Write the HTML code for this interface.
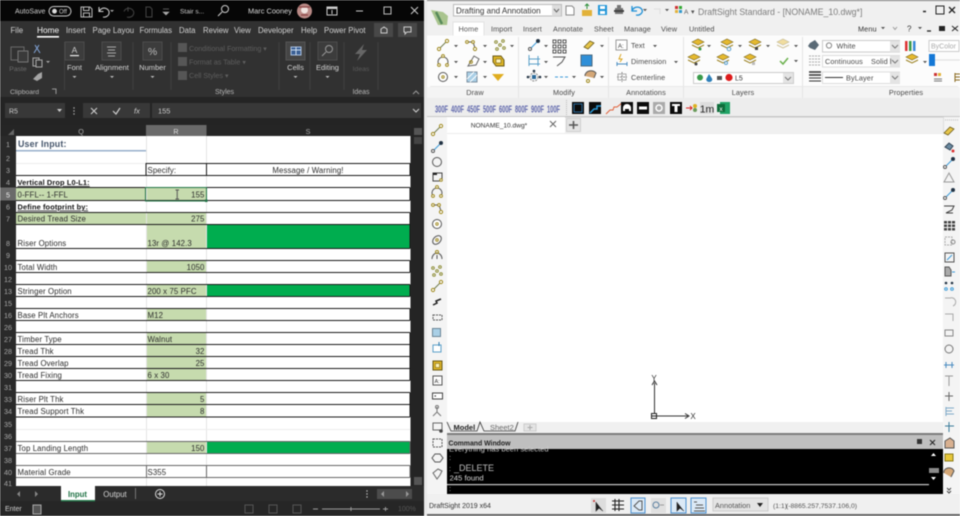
<!DOCTYPE html>
<html><head><meta charset="utf-8"><style>
html,body{margin:0;padding:0;background:#fff;width:960px;height:516px;overflow:hidden}
svg{display:block;filter:blur(.42px)}
text{font-family:"Liberation Sans",sans-serif;white-space:pre}
.c{font-size:7.8px;fill:#2b2b2b;letter-spacing:.12px}
.b{font-weight:bold;fill:#111;font-size:7.4px}
.h{font-size:7.2px;fill:#a8a8a8;text-anchor:middle}
.t{font-size:7.8px;fill:#d0d0d0}
.m{text-anchor:middle}
.e{text-anchor:end}
.d{font-size:7.3px;fill:#4a4a4a;letter-spacing:.1px}
.l{fill:none;stroke:#c9c9c9;stroke-width:1}
.g{fill:none;stroke:#6c6c4a;stroke-width:1}
</style></head><body>
<svg width="960" height="516" viewBox="0 0 960 516" xmlns="http://www.w3.org/2000/svg">
<defs>
<g id="ln"><path d="M-4 4L4-4" stroke="#6f7a4a" fill="none"/><circle cx="-4" cy="4" r="1.600" fill="#fff" stroke="#a08a20"/><circle cx="4" cy="-4" r="1.600" fill="#fff" stroke="#a08a20"/></g>
<g id="lb"><path d="M-4 4L4-4" stroke="#3a9ad8" fill="none"/><circle cx="-4" cy="4" r="1.500" fill="#fff" stroke="#555"/><circle cx="4" cy="-4" r="1.500" fill="#234" stroke="#234"/></g>
<g id="poly"><path d="M-4-3L2-3L4 3" stroke="#555" fill="none"/><circle cx="-4" cy="-3" r="1.400" fill="#fff" stroke="#a08a20"/><circle cx="2" cy="-3" r="1.400" fill="#fff" stroke="#a08a20"/><circle cx="4" cy="4" r="1.600" fill="#fff" stroke="#a08a20"/></g>
<g id="dots"><circle cx="-4" cy="-3" r="1.300" fill="none" stroke="#8a8a30"/><circle cx="3" cy="-4" r="1.300" fill="none" stroke="#8a8a30"/><circle cx="0" cy="0" r="1.300" fill="none" stroke="#8a8a30"/><circle cx="-3" cy="4" r="1.300" fill="none" stroke="#8a8a30"/><circle cx="4" cy="3" r="1.300" fill="none" stroke="#8a8a30"/></g>
<g id="circ"><circle r="4.500" fill="#fff" stroke="#555"/><circle r="1.200" fill="none" stroke="#a08a20"/></g>
<g id="arc"><path d="M-4 4A5 5 0 1 1 4 4" fill="none" stroke="#555"/><circle cx="-4" cy="4" r="1.400" fill="#fff" stroke="#a08a20"/><circle cx="4" cy="4" r="1.400" fill="#fff" stroke="#a08a20"/><circle cy="-5" r="1.400" fill="#fff" stroke="#a08a20"/></g>
<g id="layer"><path d="M-6-2L0-5L6-2L0 1Z" fill="#e5b92f" stroke="#7a6518" stroke-width=".6"/><path d="M-6 1L0 4L6 1" fill="none" stroke="#9a8020"/></g>
<g id="eras"><path d="M-5 2L1-4L5-2L-1 4Z" fill="#e7c64a" stroke="#6a5a18" stroke-width=".8"/></g>
<g id="dn"><path d="M-2-1L2-1L0 1.200Z" fill="#555"/></g>
<g id="blk"><rect x="-6" y="-6" width="12" height="12" fill="#0b0b0b"/></g>
</defs>

<!-- LEFT WINDOW -->
<rect x="0" y="0" width="425" height="516" fill="#222"/>
<rect x="0" y="0" width="425" height="21" fill="#060606"/>
<rect x="0" y="21" width="425" height="76" fill="#313131"/>
<rect x="0" y="97" width="425" height="28" fill="#242424"/>
<text x="15" y="13.500" style="font-size:7px;fill:#cfcfcf">AutoSave</text>
<rect x="49" y="6.500" width="22" height="9.500" rx="4.700" fill="none" stroke="#ccc"/><circle cx="54.500" cy="11.200" r="2.400" fill="#ddd"/><text x="59" y="13.500" style="font-size:6px;fill:#ccc">Off</text>
<path d="M81 7H90L92 9V17H81ZM83.500 7V10.500H89V7M83.500 17V13H89.500V17" fill="none" stroke="#bbb"/>
<path d="M99 7V11.500H103.500M99.500 11A5 4.500 0 1 1 103 17" fill="none" stroke="#ccc" stroke-width="1.100"/><path d="M110 10H114L112 12Z" fill="#aaa"/>
<path d="M128 7V11.500M124 11.500A5 4.500 0 1 1 127 17" fill="none" stroke="#444"/>
<path d="M146 7H150L152 9V17H146Z" fill="none" stroke="#444"/>
<path d="M163 9H169M163 12H169L166 15Z" fill="#aaa" stroke="#aaa" stroke-width=".6"/>
<text x="180" y="13.500" style="font-size:6.600px;fill:#ccc">Stair s...</text>
<circle cx="225" cy="9" r="3.500" fill="none" stroke="#ccc"/><path d="M222 12L218 16" stroke="#ccc" stroke-width="1.100"/>
<text x="248" y="13.500" style="font-size:7.400px;fill:#d8d8d8">Marc Cooney</text>
<circle cx="304.500" cy="11" r="7.500" fill="#b98a86"/><circle cx="304.500" cy="10" r="3.500" fill="#f0e4e0"/><path d="M299 7H310M301 15H308" stroke="#8c4444" stroke-width="1.200"/>
<rect x="327" y="7" width="10" height="8" fill="none" stroke="#ccc"/><rect x="327" y="7" width="10" height="2" fill="#ccc"/><path d="M332 10V14" stroke="#ccc"/>
<path d="M356 11H363" stroke="#ccc"/><rect x="384" y="7" width="7" height="7" fill="none" stroke="#bbb"/><path d="M411 7L418 14M418 7L411 14" stroke="#ccc"/>

<text x="10.500" y="33" class="t">File</text>
<text x="37" y="33" style="font-size:8.300px;fill:#f5f5f5">Home</text><rect x="37" y="36" width="22" height="1.600" fill="#fff"/>
<text x="66" y="33" class="t">Insert</text><text x="92.500" y="33" class="t">Page Layou</text><text x="139.500" y="33" class="t">Formulas</text>
<text x="179" y="33" class="t">Data</text><text x="203" y="33" class="t">Review</text><text x="234" y="33" class="t">View</text>
<text x="258" y="33" class="t">Developer</text><text x="301" y="33" class="t">Help</text><text x="324" y="33" class="t">Power Pivot</text>
<rect x="374" y="23" width="19" height="14" fill="#484848"/><rect x="398" y="23" width="19" height="14" fill="#484848"/>
<path d="M381 33V29L384 27L387 29V33ZM404 27H411V32H407L405 34V32H404Z" fill="none" stroke="#ccc"/>

<!-- ribbon left -->
<path d="M11 47H24V60H11Z" fill="none" stroke="#6a6a6a"/><rect x="18" y="51" width="10" height="11" fill="#3a3a3a" stroke="#777"/>
<text x="18" y="71" class="m" style="font-size:6.800px;fill:#6c6c6c">Paste</text>
<path d="M34 53L39 45M40 53L35 45" stroke="#7e9fd0" stroke-width="1.100"/>
<rect x="33" y="58" width="6" height="8" fill="none" stroke="#aaa"/><rect x="36" y="60" width="6" height="7" fill="#333" stroke="#aaa"/><path d="M46 61H50L48 63Z" fill="#aaa"/>
<path d="M33 79L38 74L42 72V78L37 81Z" fill="#a5a5a5"/>
<text x="10" y="94" style="font-size:6.800px;fill:#b5b5b5">Clipboard</text><path d="M52 89H56V94" fill="none" stroke="#999"/>
<path d="M64.500 42V90M133 42V90M171 42V90M279 42V90M310 42V90M344 42V90M378 42V90" stroke="#414141"/>
<rect x="65" y="42" width="19" height="18" fill="#3c3c3c" stroke="#4c4c4c"/><text x="74.500" y="53" class="m" style="font-size:8.500px;fill:#ccc">A</text><rect x="70" y="55" width="9" height="1.200" fill="#eee"/>
<text x="74.500" y="70" class="m" style="font-size:7.500px;fill:#d5d5d5">Font</text><path d="M72.500 76H76.500L74.500 78Z" fill="#bbb"/>
<rect x="102" y="42" width="19" height="18" fill="#3c3c3c" stroke="#4c4c4c"/><path d="M107 47H116M108 50H115M107 53H116M108 56H115" stroke="#aaa"/>
<text x="112" y="70" class="m" style="font-size:7.600px;fill:#d5d5d5">Alignment</text><path d="M110 76H114L112 78Z" fill="#bbb"/>
<rect x="143" y="42" width="19" height="18" fill="#3c3c3c" stroke="#4c4c4c"/><text x="152.500" y="55" class="m" style="font-size:10.500px;fill:#bbb">%</text>
<text x="152.500" y="70" class="m" style="font-size:7.500px;fill:#d5d5d5">Number</text><path d="M150.500 76H154.500L152.500 78Z" fill="#bbb"/>
<rect x="178" y="43" width="9" height="9" fill="#565656"/><rect x="178" y="57" width="9" height="9" fill="#565656"/><rect x="178" y="71" width="9" height="9" fill="#565656"/>
<text x="189" y="51" style="font-size:7.200px;fill:#5e5e5e">Conditional Formatting ▾</text>
<text x="189" y="64.500" style="font-size:7.200px;fill:#5e5e5e">Format as Table ▾</text>
<text x="189" y="78" style="font-size:7.200px;fill:#5e5e5e">Cell Styles ▾</text>
<text x="224.500" y="94" class="m" style="font-size:7px;fill:#b5b5b5">Styles</text>
<rect x="286" y="42" width="19" height="18" fill="#454545" stroke="#555"/><rect x="291" y="47" width="10" height="8" fill="#3a5f94" stroke="#a9c0e0"/><path d="M291 50H301M296 47V55" stroke="#cde"/>
<text x="295.500" y="70" class="m" style="font-size:7.500px;fill:#d5d5d5">Cells</text><path d="M293.500 76H297.500L295.500 78Z" fill="#bbb"/>
<rect x="318" y="42" width="19" height="18" fill="#3c3c3c" stroke="#4c4c4c"/><circle cx="329" cy="49" r="3.500" fill="none" stroke="#999"/><path d="M326 52L322 56" stroke="#999"/>
<text x="327.500" y="70" class="m" style="font-size:7.500px;fill:#d5d5d5">Editing</text><path d="M325.500 76H329.500L327.500 78Z" fill="#bbb"/>
<path d="M364 44L355 54H360L357 61L367 50H362Z" fill="#666"/>
<text x="361" y="71" class="m" style="font-size:6.800px;fill:#5a5a5a">Ideas</text>
<text x="361" y="94" class="m" style="font-size:7px;fill:#b5b5b5">Ideas</text>
<path d="M413 94L416 91L419 94" fill="none" stroke="#999"/>

<!-- formula bar -->
<rect x="5" y="103" width="60" height="15" fill="#383838"/><text x="9" y="113.500" style="font-size:7px;fill:#ccc">R5</text>
<path d="M57 109H62L59.500 112Z" fill="#ccc"/>
<circle cx="74" cy="108" r=".7" fill="#bbb"/><circle cx="74" cy="111" r=".7" fill="#bbb"/><circle cx="74" cy="114" r=".7" fill="#bbb"/>
<rect x="83" y="103" width="67" height="15" fill="#383838"/><rect x="152" y="103" width="269" height="15" fill="#383838"/>
<path d="M91 108L97 114M97 108L91 114" stroke="#ccc" stroke-width="1.100"/><path d="M113 111L116 114L120 108" fill="none" stroke="#ccc" stroke-width="1.200"/>
<text x="134" y="113.500" style="font-size:7.500px;font-style:italic;fill:#ccc">fx</text>
<text x="158" y="113.500" style="font-size:7.400px;fill:#ccc">155</text>
<path d="M413 109L416 112L419 109" fill="none" stroke="#ccc" stroke-width="1.100"/>

<!-- headers -->
<rect x="0" y="125" width="411" height="11" fill="#252525"/>
<rect x="0" y="136" width="16" height="350" fill="#2a2a2a"/>
<path d="M8 135L14 135L14 129Z" fill="#666"/>
<rect x="146" y="125" width="60.500" height="11" fill="#6a6a6a"/>
<text x="81" y="134" class="h">Q</text><text x="176" y="134" class="h" style="fill:#ddd">R</text><text x="308" y="134" class="h">S</text>

<!-- sheet -->
<rect x="16" y="136" width="394.500" height="350" fill="#fff"/>
<g fill="#c6dbae">
<rect x="16" y="187.500" width="130" height="13"/><rect x="146" y="187.500" width="60.500" height="13"/>
<rect x="16" y="212" width="130" height="12.500"/><rect x="146" y="212" width="60.500" height="36.500"/>
<rect x="146" y="260.500" width="60.500" height="12"/><rect x="146" y="284.500" width="60.500" height="12"/>
<rect x="146" y="308.500" width="60.500" height="12"/><rect x="146" y="332.500" width="60.500" height="48"/>
<rect x="146" y="392.500" width="60.500" height="24.500"/><rect x="146" y="441.500" width="60.500" height="12"/>
</g>
<g fill="#00ad4f">
<rect x="206.500" y="224.500" width="203" height="24"/><rect x="206.500" y="284.500" width="203" height="12"/><rect x="206.500" y="441.500" width="203" height="12"/>
</g>
<path d="M146.500 136V486M206.500 136V486" stroke="#e4e4e4"/>
<path d="M16 163.500H410M16 200.500H410M16 248.500H410M16 332.500H410M16 392.500H410M16 429.500H410M16 465.500H410" stroke="#ececec"/>
<rect x="16" y="150" width="130" height="1.500" fill="#97afcb"/>
<g fill="none" stroke="#1a1a1a" stroke-width="1">
<path d="M146 163.500H410V175.500H146ZM206.500 163.500V175.500"/>
<path d="M16 175.500H146"/>
<path d="M16 187.500H410M16 200.500H410M410 187.500V200.500"/>
<path d="M16 212.500H410M16 224.500H410M16 248.500H410M410 212.500V248.500"/>
<path d="M16 260.500H410M16 272.500H410M410 260.500V272.500"/>
<path d="M16 284.500H410M16 296.500H410M410 284.500V296.500"/>
<path d="M16 308.500H410M16 320.500H410M410 308.500V320.500"/>
<path d="M16 332.500H410M16 344.500H410M16 356.500H410M16 368.500H410M16 380.500H410M410 332.500V380.500"/>
<path d="M16 392.500H410M16 404.500H410M16 417H410M410 392.500V417"/>
</g>
<g fill="none" stroke="#666" stroke-width="1">
<path d="M16 441.500H410M16 453.500H410M410 441.500V453.500"/>
<path d="M16 465.500H410M16 477.500H410M410 465.500V477.500M146.500 465.500V477.500M206.500 465.500V477.500"/>
</g>
<rect x="145.500" y="187.500" width="61" height="13.500" fill="none" stroke="#217346" stroke-width="1"/><rect x="205" y="199.500" width="2.500" height="2.500" fill="#217346"/>
<path d="M175.500 190H179M177.200 190V199M175.500 199H179" stroke="#555" fill="none"/>

<g class="c">
<text x="18" y="147" style="font-size:8.800px;font-weight:bold;fill:#44546a;letter-spacing:.2px">User Input:</text>
<text x="147.500" y="173">Specify:</text>
<text x="308" y="173" class="m">Message / Warning!</text>
<text x="17.500" y="185" class="b" text-decoration="underline">Vertical Drop L0-L1:</text>
<text x="17.500" y="197.500">0-FFL-- 1-FFL</text>
<text x="17.500" y="209.500" class="b" text-decoration="underline">Define footprint by:</text>
<text x="17.500" y="221.500">Desired Tread Size</text>
<text x="17.500" y="246">Riser Options</text><text x="147.500" y="246">13r @ 142.3</text>
<text x="17.500" y="270">Total Width</text>
<text x="17.500" y="294">Stringer Option</text><text x="147.500" y="294">200 x 75 PFC</text>
<text x="17.500" y="318">Base Plt Anchors</text><text x="147.500" y="318">M12</text>
<text x="17.500" y="342">Timber Type</text><text x="147.500" y="342">Walnut</text>
<text x="17.500" y="354">Tread Thk</text>
<text x="17.500" y="366">Tread Overlap</text>
<text x="17.500" y="378">Tread Fixing</text><text x="147.500" y="378">6 x 30</text>
<text x="17.500" y="402">Riser Plt Thk</text>
<text x="17.500" y="414">Tread Support Thk</text>
<text x="17.500" y="451">Top Landing Length</text>
<text x="17.500" y="475">Material Grade</text><text x="147.500" y="475">S355</text>
</g>
<g class="c" text-anchor="end">
<text x="204.500" y="197.500">155</text><text x="204.500" y="221.500">275</text><text x="204.500" y="270">1050</text>
<text x="204.500" y="354">32</text><text x="204.500" y="366">25</text><text x="204.500" y="402">5</text><text x="204.500" y="414">8</text><text x="204.500" y="451">150</text>
</g>
<!-- row numbers -->
<rect x="0" y="187.500" width="16" height="13" fill="#6a6a6a"/>
<g class="h">
<text x="8" y="147">1</text><text x="8" y="161">2</text><text x="8" y="173">3</text><text x="8" y="185">4</text><text x="8" y="197.500" style="fill:#eee">5</text><text x="8" y="209.500">6</text><text x="8" y="221.500">7</text><text x="8" y="246">8</text><text x="8" y="258">9</text><text x="8" y="270">10</text><text x="8" y="282">12</text><text x="8" y="294">13</text><text x="8" y="306">15</text><text x="8" y="318">16</text><text x="8" y="330">26</text><text x="8" y="342">27</text><text x="8" y="354">28</text><text x="8" y="366">29</text><text x="8" y="378">30</text><text x="8" y="390">31</text><text x="8" y="402">33</text><text x="8" y="414">34</text><text x="8" y="427">35</text><text x="8" y="439">36</text><text x="8" y="451">37</text><text x="8" y="463">38</text><text x="8" y="475">40</text><text x="8" y="486">41</text>
</g>
<!-- scrollbar -->
<rect x="411" y="125" width="13" height="361" fill="#242424"/>
<rect x="414" y="128" width="8" height="7" fill="#555"/><rect x="414" y="137" width="8" height="7" fill="#444"/><rect x="414" y="477" width="8" height="8" fill="#555"/>
<!-- sheet tabs -->
<rect x="0" y="486" width="425" height="15" fill="#2b2b2b"/><rect x="0" y="501" width="425" height="15" fill="#262626"/>
<path d="M20 491L17 494L20 497ZM35 491L38 494L35 497Z" fill="#888"/>
<rect x="61" y="486" width="34" height="15" fill="#fff"/><rect x="61" y="500" width="34" height="1.500" fill="#217346"/>
<text x="77.500" y="497" class="m" style="font-size:7.800px;font-weight:bold;fill:#217346">Input</text>
<text x="115" y="497" class="m" style="font-size:7.800px;fill:#d2d2d2">Output</text>
<path d="M135.500 488V499" stroke="#777"/>
<circle cx="160" cy="494" r="4.500" fill="none" stroke="#ddd"/><path d="M157.500 494H162.500M160 491.500V496.500" stroke="#ddd"/>
<circle cx="367" cy="491" r=".7" fill="#ccc"/><circle cx="367" cy="494" r=".7" fill="#ccc"/><circle cx="367" cy="497" r=".7" fill="#ccc"/>
<rect x="377" y="489" width="35" height="10" fill="#4c4c4c"/><path d="M384 491L381 494L384 497ZM406 491L409 494L406 497Z" fill="#999"/>
<text x="5" y="511" style="font-size:7px;fill:#d0d0d0">Enter</text>
<rect x="33" y="505" width="8" height="9" fill="#555" stroke="#aaa"/>
<rect x="245" y="505" width="8" height="8" fill="none" stroke="#555"/><rect x="269" y="505" width="8" height="8" fill="none" stroke="#555"/><rect x="293" y="505" width="8" height="8" fill="none" stroke="#555"/>
<path d="M313 509H318M322 509H380M383 509H388M385.500 507V511M351 507V511" stroke="#9a9a9a"/>
<text x="398" y="511" style="font-size:7px;fill:#555">100%</text>
<!-- gap -->
<rect x="424" y="0" width="3" height="516" fill="#e9e9e9"/>

<!-- RIGHT WINDOW -->
<rect x="427" y="0" width="533" height="516" fill="#f0f0f0"/>
<rect x="427" y="0" width="533" height="1" fill="#777"/>
<path d="M431 10L438 25H447L448 16L443 12Z" fill="#a9c48e"/><path d="M436 12L442 24" stroke="#578a5a" stroke-width="2.500"/>
<rect x="453.500" y="4.500" width="108" height="11.500" fill="#fff" stroke="#bbb"/><rect x="552" y="5" width="9" height="11" fill="#ddd"/>
<path d="M554 9L556.500 12L559 9" fill="none" stroke="#666"/>
<text x="456" y="13.500" style="font-size:8.100px;fill:#333">Drafting and Annotation</text>
<path d="M566 6H572L574 8V15H566Z" fill="#fff" stroke="#888"/>
<path d="M582 10H592V16H582Z" fill="#e2b23a"/><path d="M587 4V9M585 6L587 4L589 6" stroke="#2f8f3a" fill="none"/>
<rect x="598" y="5" width="9" height="10" fill="#2196d8"/><rect x="600" y="6" width="5" height="3" fill="#fff"/><rect x="600" y="11" width="5" height="3" fill="#fff"/>
<path d="M615 8H623V14H615ZM617 5H621V8H617Z" fill="#777"/><rect x="614" y="10" width="10" height="2" fill="#444"/>
<path d="M632 6V11H637M632.500 10A5 4 0 1 1 636 15" fill="none" stroke="#1d8fd6" stroke-width="1.300"/>
<use href="#dn" x="645" y="10"/><path d="M654 9L660 9V14" fill="none" stroke="#ddd"/><use href="#dn" x="667" y="10"/>
<rect x="675" y="6" width="3" height="3" fill="#c33"/><rect x="679" y="6" width="3" height="3" fill="#3a3"/><rect x="675" y="10" width="3" height="3" fill="#e2b23a"/><rect x="679" y="10" width="3" height="3" fill="#39c"/>
<text x="684" y="14" style="font-size:6.500px;fill:#555">A</text>
<text x="691" y="14" style="font-size:7px;fill:#555">▾</text>
<text x="698" y="15" style="font-size:8.750px;fill:#7c7c7c">DraftSight Standard - [NONAME_10.dwg*]</text>
<path d="M923 11.500H926" stroke="#222" stroke-width="1.500"/><rect x="936" y="6" width="8" height="8" fill="none" stroke="#222"/><path d="M949 7L955 13M955 7L949 13" stroke="#222" stroke-width="1.300"/>

<rect x="453" y="22" width="31" height="14" fill="#fff" stroke="#e2e2e2"/>
<rect x="427" y="35.500" width="533" height="52" fill="#fcfcfc"/>
<rect x="427" y="87" width="533" height="11" fill="#f4f4f4"/>
<g class="d">
<text x="458.500" y="31.500" style="fill:#555">Home</text><text x="491" y="31.500">Import</text><text x="523" y="31.500">Insert</text><text x="553" y="31.500">Annotate</text><text x="594" y="31.500">Sheet</text><text x="624" y="31.500">Manage</text><text x="661" y="31.500">View</text><text x="689" y="31.500">Untitled</text>
<text x="858" y="31.500" style="fill:#333">Menu</text>
<text x="475" y="95" class="m">Draw</text><text x="564" y="95" class="m">Modify</text><text x="646" y="95" class="m">Annotations</text><text x="743" y="95" class="m">Layers</text><text x="906" y="95" class="m">Properties</text>
</g>
<use href="#dn" x="883" y="28"/><path d="M893 27L895 29.500L897 27" fill="none" stroke="#999"/>
<text x="907" y="31.500" style="font-size:8px;fill:#333">?</text><use href="#dn" x="920" y="28"/>
<path d="M927 31H931" stroke="#222" stroke-width="1.300"/><rect x="939" y="26" width="6" height="5" fill="#222"/><path d="M952 26L958 31M958 26L952 31" stroke="#222"/>
<path d="M518.500 37V98M608.500 37V98M683.500 37V98M802.500 37V98" stroke="#e4e4e4"/>
<path d="M430 86.500H958" stroke="#e8e8e8"/>

<!-- draw icons -->
<use href="#ln" x="443" y="45"/><use href="#dn" x="456" y="46"/>
<use href="#poly" x="471" y="45"/><use href="#dn" x="485" y="46"/>
<use href="#dots" x="500" y="45"/><use href="#dn" x="512" y="46"/>
<use href="#arc" x="443" y="61"/><use href="#dn" x="456" y="62"/>
<path d="M468 66L474 56L479 59L476 65Z" fill="#fff" stroke="#666"/><circle cx="471" cy="62" r="1.400" fill="none" stroke="#a08a20"/><use href="#dn" x="485" y="62"/>
<path d="M493 56L501 56L504 60V66H496L493 62Z" fill="#dbb326" stroke="#6a5a18"/><rect x="496" y="59" width="5" height="4" fill="#fff3b8" stroke="#6a5a18" stroke-width=".6"/>
<use href="#circ" x="443" y="77"/><use href="#dn" x="456" y="77"/>
<rect x="467" y="72" width="10" height="10" fill="#a9cfe6" stroke="#7b8fa0"/><path d="M467 79L474 72M470 82L477 75" stroke="#fff"/><use href="#dn" x="485" y="77"/>
<path d="M492 74H504L498 81Z" fill="#e0ad20"/>
<!-- modify icons -->
<use href="#lb" x="534" y="45"/><use href="#dn" x="546" y="46"/>
<g fill="none" stroke="#555"><rect x="553" y="40" width="3" height="3"/><rect x="558" y="40" width="3" height="3"/><rect x="563" y="40" width="3" height="3"/><rect x="553" y="45" width="3" height="3"/><rect x="558" y="45" width="3" height="3"/><rect x="563" y="45" width="3" height="3"/><rect x="553" y="50" width="3" height="3"/><rect x="558" y="50" width="3" height="3"/><rect x="563" y="50" width="3" height="3"/></g>
<use href="#eras" x="589" y="45"/><use href="#dn" x="602" y="46"/>
<path d="M529 55V66M538 56V66M529 59H540M529 64H540" fill="none" stroke="#5a9fc8"/><use href="#dn" x="546" y="62"/>
<path d="M553 57H565L562 62L557 66" fill="none" stroke="#555"/>
<rect x="581" y="55" width="11" height="11" fill="#2f8fd8" stroke="#4a6a80"/>
<circle cx="534" cy="77" r="4" fill="none" stroke="#888" stroke-dasharray="2 1"/><rect x="532" y="75" width="4" height="4" fill="#2a6a9a"/><circle cx="534" cy="71" r="1.300" fill="#234"/><circle cx="528" cy="77" r="1.300" fill="#234"/><circle cx="540" cy="77" r="1.300" fill="#234"/><use href="#dn" x="546" y="77"/>
<path d="M555 77H568" stroke="#3a9ad8" stroke-dasharray="3 2"/><use href="#dn" x="574" y="77"/>
<path d="M585 76A6 5 0 0 1 596 73L594 78" fill="#d4a777" stroke="#555"/><circle cx="588" cy="81" r="1.500" fill="none" stroke="#a08a20"/><use href="#dn" x="602" y="77"/>
<!-- annotation -->
<rect x="616" y="40" width="11" height="10" fill="#fff" stroke="#999"/><text x="618" y="48" style="font-size:6px;fill:#333">A:</text>
<text x="631" y="48" class="d">Text</text><use href="#dn" x="655" y="46"/>
<path d="M621 54L619 59H622L620 62" stroke="#d9a520" fill="none"/><path d="M617 64H627M617 62V66M627 62V66" stroke="#4a8cc0" fill="none"/>
<text x="631" y="64" class="d">Dimension</text><use href="#dn" x="676" y="62"/>
<path d="M617 77H627M622 72V82" stroke="#888" stroke-dasharray="2 1" fill="none"/><rect x="618" y="74" width="8" height="6" fill="none" stroke="#aaa"/>
<text x="631" y="80" class="d">Centerline</text>
<!-- layers -->
<use href="#layer" x="698" y="44"/><circle cx="700" cy="49" r="1.500" fill="#3a9a4a"/><use href="#dn" x="709" y="46"/>
<use href="#layer" x="727" y="44"/><circle cx="729" cy="49" r="1.800" fill="none" stroke="#5aa0d0"/><use href="#dn" x="740" y="46"/>
<use href="#layer" x="755" y="44"/><rect x="755" y="47" width="3" height="3" fill="#444"/><use href="#dn" x="768" y="46"/>
<use href="#layer" y="44" x="783" style="opacity:.45"/><use href="#dn" x="796" y="46"/>
<use href="#layer" x="694" y="59"/><circle cx="696" cy="64" r="1.500" fill="#444"/>
<use href="#layer" x="723" y="59"/><circle cx="726" cy="63" r="1.500" fill="none" stroke="#5aa0d0"/>
<use href="#layer" x="750" y="59"/><rect x="752" y="62" width="3" height="3" fill="#bbb"/>
<path d="M780 61L783 64L788 58" fill="none" stroke="#6ab04c" stroke-width="1.500"/><use href="#dn" x="796" y="61"/>
<rect x="693.500" y="72.500" width="100" height="11" fill="#fff" stroke="#ccc"/><rect x="783" y="73" width="10" height="10" fill="#e4e4e4"/>
<path d="M785 77L788 80L791 77" fill="none" stroke="#777"/>
<circle cx="700" cy="77.500" r="3" fill="#3a9a4a"/><path d="M709 74L712 78.500A3 2.500 0 1 1 706.500 78.500Z" fill="#2e7fb8"/>
<path d="M717 76H722V80H717Z" fill="#555"/><circle cx="729" cy="77.500" r="3.600" fill="#dd1a1a"/>
<text x="735" y="80.500" style="font-size:7px;fill:#333">L5</text>
<!-- properties -->
<path d="M810 43L815 40L819 45L815 50L810 48L808 46Z" fill="#5a6a76"/>
<rect x="822.500" y="40.500" width="77" height="11.500" fill="#fff" stroke="#ccc"/><rect x="890" y="41" width="10" height="11" fill="#e4e4e4"/><path d="M892 45L895 48L898 45" fill="none" stroke="#777"/>
<circle cx="829" cy="45.500" r="2.600" fill="none" stroke="#888"/><text x="836.500" y="48.500" class="d">White</text>
<rect x="905" y="41" width="2.500" height="10" fill="#d33"/><rect x="909" y="41" width="2.500" height="10" fill="#3a9a4a"/><rect x="913" y="41" width="2.500" height="10" fill="#3a8ad8"/>
<rect x="929" y="40.500" width="30" height="11" fill="#fff" stroke="#ccc"/><text x="931" y="48.500" style="font-size:7px;fill:#aaa">ByColor</text>
<path d="M809 56H820M809 59H820M809 62H820M809 65H820" stroke="#aaa" stroke-dasharray="2 1"/>
<rect x="822.500" y="55.500" width="77" height="11.500" fill="#fff" stroke="#ddd"/><rect x="890" y="56" width="10" height="11" fill="#e4e4e4"/><path d="M892 60L895 63L898 60" fill="none" stroke="#777"/>
<text x="825" y="64" class="d">Continuous</text><text x="871" y="64" class="d">Solid l</text>
<use href="#layer" x="912" y="59"/><use href="#dn" x="925" y="62"/>
<rect x="929" y="54" width="6" height="12" fill="#1578d6"/><path d="M935 60H960" stroke="#ddd"/>
<path d="M809 72H821M809 75H821" stroke="#333" stroke-width="1.500"/><path d="M809 78H821M809 81H821" stroke="#333"/>
<rect x="822.500" y="72" width="77" height="11.500" fill="#fff" stroke="#ddd"/><rect x="890" y="72.500" width="10" height="11" fill="#e4e4e4"/><path d="M892 76L895 79L898 76" fill="none" stroke="#777"/>
<path d="M825 77.500H843" stroke="#333"/><text x="846" y="80.500" class="d">ByLayer</text>
<rect x="934" y="73" width="3" height="3" fill="#c33"/><rect x="938" y="73" width="3" height="3" fill="#e2b23a"/><path d="M934 79H942M934 81H942" stroke="#777"/><path d="M955 73V82M955 74H960M955 77H960M955 80H960" stroke="#8a6a20"/>

<!-- tool strip -->
<rect x="427" y="98" width="533" height="18" fill="#ededed"/>
<g style="font-size:10.500px;font-weight:bold;fill:#6068ac">
<text x="435" y="112.500" textLength="13" lengthAdjust="spacingAndGlyphs">300F</text><text x="451" y="112.500" textLength="13" lengthAdjust="spacingAndGlyphs">400F</text><text x="467" y="112.500" textLength="13" lengthAdjust="spacingAndGlyphs">450F</text><text x="483" y="112.500" textLength="13" lengthAdjust="spacingAndGlyphs">500F</text><text x="499" y="112.500" textLength="13" lengthAdjust="spacingAndGlyphs">600F</text><text x="515" y="112.500" textLength="13" lengthAdjust="spacingAndGlyphs">800F</text><text x="531" y="112.500" textLength="13" lengthAdjust="spacingAndGlyphs">900F</text><text x="547" y="112.500" textLength="13" lengthAdjust="spacingAndGlyphs">100F</text>
</g>
<path d="M566.500 100V115" stroke="#bbb" stroke-dasharray="1 1"/>
<use href="#blk" x="578" y="108"/><rect x="574" y="104" width="8" height="8" fill="none" stroke="#2a6a9a"/>
<use href="#blk" x="595" y="108"/><path d="M590 113L594 109H597V106H601" stroke="#2a9ad8" fill="none" stroke-width="1.500"/>
<path d="M606 114L610 110H613L614 107H617L622 103" stroke="#e0613a" fill="none"/>
<use href="#blk" x="627" y="108"/><path d="M623 111V108A4 4 0 0 1 631 108V111H629V109H625V111Z" fill="#fff"/>
<use href="#blk" x="643" y="108"/><rect x="639" y="106.500" width="8" height="3" fill="#fff"/>
<rect x="653" y="102" width="12" height="12" fill="#aaa"/><circle cx="659" cy="108" r="3" fill="none" stroke="#fff" stroke-width="1.500"/>
<use href="#blk" x="676" y="108"/><path d="M672 104H680V106H677.500V112H674.500V106H672Z" fill="#fff"/>
<path d="M686 108H692M690 106L692 108L690 110" stroke="#d22" fill="none"/><circle cx="695" cy="106" r="2" fill="#dcb020"/><circle cx="695" cy="110" r="2" fill="#6a9a5a"/>
<rect x="700" y="102" width="14" height="12" fill="#ddd"/><text x="707" y="112.500" class="m" style="font-size:10.500px;fill:#222">1m</text>
<rect x="720" y="102" width="10" height="12" fill="#21a366"/><rect x="717" y="104" width="8" height="8" fill="#0f6d3a"/><text x="721" y="111" class="m" style="font-size:6.500px;fill:#fff">x</text>

<!-- drawing -->
<rect x="427" y="116" width="533" height="17" fill="#f0f0f0"/>
<rect x="427" y="116" width="533" height="1.500" fill="#c8c8c8"/>
<rect x="447" y="117" width="118" height="17" fill="#fff"/>
<text x="499" y="127.500" class="m" style="font-size:6.600px;fill:#333">NONAME_10.dwg*</text>
<path d="M550 121L556 127M556 121L550 127" stroke="#666"/>
<rect x="566.500" y="118.500" width="14" height="13" fill="#e4e4e4" stroke="#d0d0d0"/><path d="M569 125H578M573.500 121V129" stroke="#555" stroke-width="1.500"/>
<rect x="447" y="133" width="496" height="289" fill="#fff"/>
<path d="M447 133.500H943" stroke="#ececec"/>
<path d="M654.500 383V414M654.500 416H688" stroke="#333"/>
<path d="M652 385L654.500 381L657 385M685 413.500L689 416L685 418.500" fill="none" stroke="#333"/>
<rect x="651.500" y="413.500" width="5" height="5" fill="none" stroke="#222"/><path d="M651.500 416H656.500" stroke="#222"/>
<text x="654" y="381" class="m" style="font-size:8px;fill:#333">Y</text><text x="693" y="419" class="m" style="font-size:8px;fill:#333">X</text>

<!-- left tools -->
<rect x="427" y="117" width="20" height="377" fill="#f4f4f4"/>
<use href="#ln" x="437" y="130"/><use href="#lb" x="437" y="147"/>
<circle cx="437" cy="162" r="4.500" fill="none" stroke="#555"/>
<rect x="433" y="173" width="9" height="8" fill="none" stroke="#444"/><path d="M433 174H437" stroke="#222" stroke-width="2"/><circle cx="441" cy="180" r="1.300" fill="#fff" stroke="#a08a20"/>
<use href="#arc" x="437" y="192"/><use href="#poly" x="437" y="208"/><use href="#circ" x="437" y="224"/>
<ellipse cx="437" cy="240" rx="5" ry="3.500" fill="none" stroke="#555" transform="rotate(-45 437 240)"/><circle cx="437" cy="240" r="1.200" fill="none" stroke="#a08a20"/>
<path d="M432 259A5 6 0 0 1 442 259M437 255V259" fill="none" stroke="#555"/><circle cx="437" cy="252" r="1.500" fill="none" stroke="#a08a20"/>
<use href="#dots" x="437" y="271"/><use href="#ln" x="437" y="286"/>
<path d="M433 305L437 303L436 301L441 299" stroke="#222" stroke-width="1.500" fill="none"/>
<path d="M433 315H442V320H433Z" fill="none" stroke="#555" stroke-dasharray="2 1"/>
<rect x="432.500" y="328.500" width="8" height="8" fill="#a9cfe6" stroke="#6b8496"/>
<rect x="433" y="345" width="8" height="7" fill="#fff" stroke="#5a9fc8"/><path d="M439 342V346" stroke="#2a7ab0"/>
<rect x="433" y="361" width="9" height="9" fill="#dbb326" stroke="#6a5a18"/><rect x="435.500" y="363.500" width="4" height="4" fill="#fff3b8" stroke="#6a5a18" stroke-width=".5"/>
<rect x="433" y="376" width="9" height="9" fill="#fff" stroke="#555"/><text x="434.500" y="383" style="font-size:5.500px;fill:#333">A:</text>
<rect x="432.500" y="393" width="10" height="6" fill="#fff" stroke="#444"/><path d="M434.500 396H436" stroke="#222"/>
<path d="M437 407V412L433 416M437 412L441 416" fill="none" stroke="#777"/><circle cx="437" cy="407" r="1.500" fill="none" stroke="#777"/>
<rect x="433" y="423" width="9" height="7" fill="none" stroke="#666"/><circle cx="441" cy="431" r="1.800" fill="#444"/>
<rect x="433" y="439" width="9" height="8" fill="none" stroke="#555" stroke-dasharray="2 1"/>
<path d="M432 458L435 454H440L443 458L440 462H435Z" fill="none" stroke="#555"/>
<path d="M433 473L438 469L442 471L440 475L437 479Z" fill="none" stroke="#666"/>

<!-- right tools -->
<rect x="943" y="117" width="17" height="377" fill="#f4f4f4"/>
<path d="M943.500 117V133" stroke="#ddd"/><path d="M945 120H958" stroke="#bbb" stroke-dasharray="1 1"/>
<use href="#eras" x="949" y="131"/>
<path d="M945 147L949 143L953 146L950 150Z" fill="#6a8aa0" stroke="#345"/><circle cx="953" cy="151" r="1.500" fill="#d33"/>
<use href="#lb" x="949" y="163"/>
<path d="M949 173L954 182H944Z" fill="none" stroke="#999"/>
<use href="#lb" x="949" y="194"/>
<path d="M944 206H954L952 210L946 213H953" fill="none" stroke="#444"/>
<g fill="#444"><rect x="944" y="221" width="3" height="2.500"/><rect x="948" y="221" width="3" height="2.500"/><rect x="952" y="221" width="3" height="2.500"/><rect x="944" y="224.500" width="3" height="2.500"/><rect x="948" y="224.500" width="3" height="2.500"/><rect x="952" y="224.500" width="3" height="2.500"/><rect x="944" y="228" width="3" height="2.500"/><rect x="948" y="228" width="3" height="2.500"/><rect x="952" y="228" width="3" height="2.500"/></g>
<path d="M945 237H952V245H945Z" fill="none" stroke="#aaa" stroke-dasharray="2 1"/><circle cx="953" cy="242" r="2" fill="none" stroke="#888"/>
<rect x="945" y="253" width="9" height="9" fill="none" stroke="#555"/><path d="M947 260L952 255" stroke="#3a9ad8"/>
<path d="M945 267H949L951 270V276H945Z" fill="#aaa" stroke="#555"/><path d="M952 272H955" stroke="#3a9ad8"/>
<circle cx="946" cy="283" r="1.300" fill="#234"/><circle cx="952" cy="283" r="1.300" fill="#234"/><circle cx="946" cy="289" r="1.300" fill="none" stroke="#3a9ad8"/><circle cx="952" cy="289" r="1.300" fill="none" stroke="#3a9ad8"/>
<path d="M945 298H950A4 4 0 0 1 953 306" fill="none" stroke="#aaa"/>
<path d="M945 314H953V321" fill="none" stroke="#aaa"/>
<path d="M945 330H953V336H945Z" fill="none" stroke="#888"/>
<circle cx="949" cy="349" r="4" fill="none" stroke="#777"/>
<path d="M944 365H954M946 362V368M952 362V368" stroke="#4a8cc0" fill="none"/>
<path d="M945 376H953M949 376V386" stroke="#999" fill="none"/>
<path d="M949 392V401M945 396H953" stroke="#666"/>
<path d="M946 407V416M946 408H954M946 411H952M946 414H954" stroke="#7faac8" fill="none"/>
<path d="M949 422V432M945 426H954" stroke="#3a7a9a"/>
<path d="M945 441L950 438L954 441V448H945Z" fill="#d8b090" stroke="#555"/>
<rect x="945" y="454" width="8" height="7" fill="#e6c63a" stroke="#8a7a18"/>
<path d="M944 473A5 4 0 0 1 954 471L951 477" fill="#d4a777" stroke="#555"/>
<path d="M947 488L949 490L951 488M947 491L949 493L951 491" fill="none" stroke="#444"/>

<!-- model tabs -->
<rect x="447" y="422" width="496" height="12" fill="#f0f0f0"/>
<path d="M447 422L451 431H477L480 422L484 431H515L518 422" fill="none" stroke="#333" stroke-width=".8"/>
<text x="453.500" y="430" style="font-size:7.500px;font-weight:bold;fill:#222">Model</text>
<text x="490" y="430" style="font-size:7.500px;fill:#666">Sheet2</text>
<rect x="524" y="424" width="12" height="7" fill="#e4e4e4" stroke="#ccc"/><path d="M527.500 427.500H532.500M530 425V430" stroke="#aaa"/>
<!-- command -->
<rect x="447" y="433" width="496" height="2" fill="#7c7c7c"/>
<rect x="447" y="435" width="496" height="14" fill="#bfbfbf"/>
<text x="448.500" y="445.500" style="font-size:6.900px;font-weight:bold;fill:#222">Command Window</text>
<rect x="917" y="439" width="5" height="5" fill="#333"/><path d="M930 440L935 445M935 440L930 445" stroke="#222"/>
<rect x="447" y="449" width="496" height="45" fill="#000"/>
<rect x="447" y="484" width="482" height="1.200" fill="#c8c8c8"/>
<text x="449" y="451.500" style="font-size:7.600px;fill:#c8c8c8">Everything has been selected</text>
<text x="449" y="460" style="font-size:7.500px;fill:#bbb">:</text>
<text x="449" y="471" style="font-size:7.500px;fill:#bbb">:</text>
<text x="454" y="471" style="font-size:9px;fill:#bbb">_DELETE</text>
<text x="449.500" y="480.500" style="font-size:7.700px;fill:#d8d8d8">245 found</text>
<text x="449" y="491" style="font-size:7.500px;fill:#bbb">:</text>
<path d="M931 456L933.500 453L936 456ZM931 477L933.500 480L936 477Z" fill="#fff"/><rect x="929" y="468" width="10" height="5" fill="#8a8a8a"/>
<!-- status -->
<rect x="427" y="494" width="533" height="20" fill="#f0f0f0"/><rect x="427" y="514" width="533" height="2" fill="#666"/>
<text x="429" y="508" style="font-size:7px;fill:#333">DraftSight 2019 x64</text>
<rect x="591" y="498" width="15" height="15" fill="#ddd"/><path d="M596 502V511L599 508L603 511" fill="#222" stroke="#222" stroke-width=".6"/><circle cx="594" cy="501" r="1" fill="#c33"/>
<path d="M612 501H624M612 505H624M612 509H624M615 499V511M619 499V511" stroke="#222" stroke-width="1.100"/>
<rect x="631" y="498" width="14" height="15" fill="#dbe9f6" stroke="#4a90d0"/><path d="M634 506L639 501H642V510H639Z" fill="none" stroke="#555"/>
<rect x="651" y="498" width="15" height="15" fill="#e0e0e0"/><circle cx="656" cy="505" r="3" fill="none" stroke="#5a7fa0"/><path d="M660 505H664" stroke="#999"/>
<rect x="671" y="498" width="15" height="15" fill="#dbe9f6" stroke="#4a90d0"/><path d="M677 502V511L680 508L684 511" fill="#222" stroke="#222" stroke-width=".6"/>
<rect x="691" y="498" width="15" height="15" fill="#dbe9f6" stroke="#4a90d0"/><path d="M694 502H697M696 505H703M695 508H704M694 511H705" stroke="#555"/>
<rect x="713" y="498" width="55" height="13" fill="#e4e4e4" stroke="#ccc"/>
<text x="715" y="508" style="font-size:7.400px;fill:#555">Annotation</text><path d="M757 503H763L760 507Z" fill="#222"/>
<text x="773" y="508" style="font-size:6.800px;fill:#555">(1:1)</text>
<text x="786" y="508" style="font-size:6.800px;fill:#555">(-8865.257,7537.106,0)</text>
</svg>
</body></html>
